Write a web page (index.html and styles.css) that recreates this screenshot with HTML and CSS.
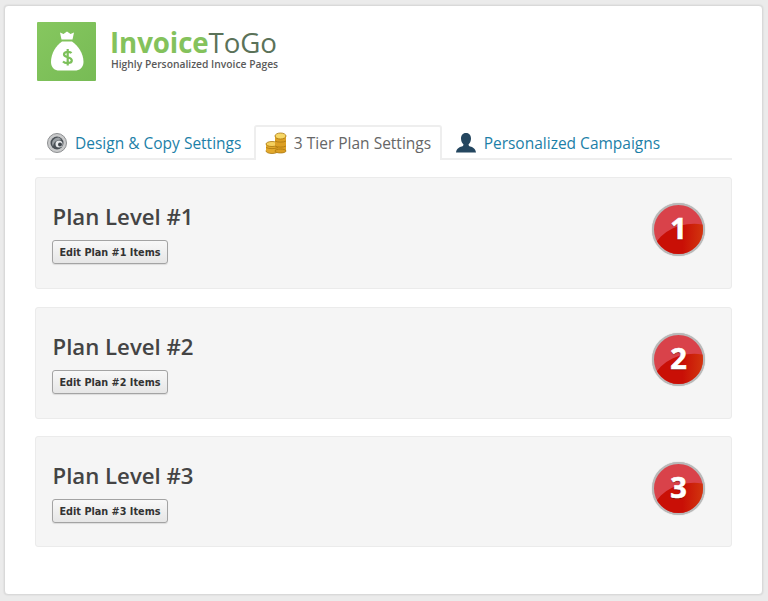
FILE: index.html
```html
<!DOCTYPE html>
<html lang="en">
<head>
<meta charset="utf-8">
<title>InvoiceToGo</title>
<link rel="stylesheet" href="styles.css">
</head>
<body>
<main class="card">
  <header class="brand">
    <svg class="logo" viewBox="0 0 59 59" width="59" height="59">
      <defs><linearGradient id="lg" x1="0" y1="0" x2="1" y2="1"><stop offset="0" stop-color="#86c75f"/><stop offset="1" stop-color="#77bb55"/></linearGradient></defs>
      <rect width="59" height="59" rx="1" fill="url(#lg)"/>
      <path d="M23 10.500 L26.500 12 L30 9.500 L33.500 12 L37 10.500 L35.500 17.500 L24.500 17.500 Z" fill="#fff"/>
      <path d="M25 19.500 L35 19.500 C41 24 46.500 31 46.500 40 C46.500 46 42 48.500 38 48.500 L22 48.500 C18 48.500 14 46 14 40 C14 31 19 24 25 19.500 Z" fill="#fff"/>
      <path d="M34.500 31 C33 29.300 27 29.100 27 32.500 C27 36 34.800 34.500 34.800 38.500 C34.800 41.900 28 41.500 26 39.500 M30.700 27 L30.700 43.500" fill="none" stroke="#7cc05a" stroke-width="2.200"/>
    </svg>
    <div class="brand-text">
      <div class="brand-name"><span class="brand-green">Invoice</span>ToGo</div>
      <div class="brand-tag">Highly Personalized Invoice Pages</div>
    </div>
  </header>

  <nav class="tabs">
    <a class="tab">
      <svg class="tab-icon" viewBox="0 0 22 22" width="22" height="22">
        <circle cx="11" cy="11" r="9.500" fill="#c9cacb" stroke="#8d8f91"/>
        <circle cx="11" cy="11" r="6.500" fill="#4a5056"/>
        <path d="M13 5.500A6 6 0 0 0 7 14.500C8 9 11 8 15.500 7.500Z" fill="#9ba0a4"/>
        <circle cx="13" cy="12" r="3.500" fill="#e6e8ea"/>
        <circle cx="14" cy="12.500" r="2" fill="#3f454b"/>
      </svg>
      <span>Design &amp; Copy Settings</span>
    </a>
    <a class="tab tab-active">
      <svg class="tab-icon" viewBox="0 0 22 22" width="22" height="22">
        <g stroke="#a9770f" stroke-width=".8">
          <ellipse cx="7" cy="19" rx="6" ry="2.500" fill="#e3a92c"/>
          <rect x="1" y="12" width="12" height="7" fill="#e3a92c" stroke="none"/>
          <ellipse cx="7" cy="12" rx="6" ry="2.500" fill="#f5d05e"/>
          <rect x="10" y="4" width="11" height="15" fill="#dc9f24" stroke="none"/>
          <ellipse cx="15.500" cy="19" rx="5.500" ry="2" fill="#dc9f24"/>
          <ellipse cx="15.500" cy="4" rx="5.500" ry="3" fill="#f7d765"/>
          <path d="M10 9c2 1.500 9 1.500 11 0M10 14c2 1.500 9 1.500 11 0M1 15.500c3 1.500 9 1.500 12 0" fill="none"/>
        </g>
      </svg>
      <span>3 Tier Plan Settings</span>
    </a>
    <a class="tab">
      <svg class="tab-icon" viewBox="0 0 22 22" width="22" height="22">
        <path d="M11 1c3.500 0 5 2.500 5 5.500 0 2.500-1 4.500-2.500 6l.5 1.500c3 1 6.500 2 7 6.500H1c.5-4.500 4-5.500 7-6.500l.5-1.500C7 11 6 9 6 6.500 6 3.500 7.500 1 11 1Z" fill="#24465f"/>
      </svg>
      <span>Personalized Campaigns</span>
    </a>
  </nav>

  <section class="panel">
    <div class="panel-body">
      <h2 class="panel-title">Plan Level #1</h2>
      <button class="btn" type="button">Edit Plan #1 Items</button>
    </div>
    <div class="badge"><span class="badge-num">1</span></div>
  </section>
  <section class="panel panel-mid">
    <div class="panel-body">
      <h2 class="panel-title">Plan Level #2</h2>
      <button class="btn" type="button">Edit Plan #2 Items</button>
    </div>
    <div class="badge"><span class="badge-num">2</span></div>
  </section>
  <section class="panel panel-last">
    <div class="panel-body">
      <h2 class="panel-title">Plan Level #3</h2>
      <button class="btn" type="button">Edit Plan #3 Items</button>
    </div>
    <div class="badge"><span class="badge-num">3</span></div>
  </section>
</main>
</body>
</html>
```
FILE: styles.css
```css
* { box-sizing: border-box; }
html, body { margin: 0; padding: 0; }
body {
  width: 768px;
  height: 601px;
  overflow: hidden;
  background: #ebebeb;
  padding: 5px 4px 6px 4px;
  font-family: "Open Sans", sans-serif;
}
.card {
  width: 759px;
  height: 590px;
  background: #fff;
  border: 1px solid #d9d9d9;
  border-radius: 4px;
  box-shadow: 0 0 2px rgba(0,0,0,.12);
  padding: 16px 30px 0 30px;
}
.brand {
  display: flex;
  align-items: flex-start;
  margin-left: 2px;
  height: 59px;
}
.logo { display: block; flex: none; }
.brand-text { margin-left: 14px; padding-top: 5px; }
.brand-name {
  font-family: "Open Sans", sans-serif;
  font-size: 27.700px;
  line-height: 31px;
  color: #5b7259;
  letter-spacing: -.1px;
}
.brand-green { color: #84c25c; font-weight: 700; }
.brand-tag {
  font-size: 10.300px;
  font-weight: 600;
  line-height: 12px;
  color: #5a5a5a;
  margin-left: 1px;
  white-space: nowrap;
}
.tabs {
  display: flex;
  gap: 1.500px;
  height: 35px;
  margin-top: 44px;
  border-bottom: 2px solid #eeeeee;
  padding-left: 0;
  margin-bottom: 17px;
}
.tab {
  display: flex;
  align-items: center;
  height: 35px;
  padding: 0 9px 1px 9px;
  font-size: 15.500px;
  color: #1c7fa8;
  border: 2px solid transparent;
  border-bottom: 0;
  border-radius: 3px 3px 0 0;
  white-space: nowrap;
}
.tab-active {
  color: #666;
  background: #fff;
  border-color: #eeeeee;
}
.tab-icon { flex: none; margin-right: 7px; }
.panel {
  display: flex;
  justify-content: space-between;
  align-items: flex-start;
  height: 112px;
  background: #f5f5f5;
  border: 1px solid #ebebeb;
  border-radius: 3px;
  padding: 25px 26px 0 16px;
  margin-bottom: 18px;
}
.panel-mid { margin-bottom: 17px; }
.panel-last { height: 111px; margin-bottom: 0; }
.panel-title {
  margin: -1px 0 0 .5px;
  font-size: 22.200px;
  line-height: 30px;
  font-weight: 600;
  color: #444;
}
.btn {
  display: block;
  width: 116px;
  height: 24px;
  margin-top: 8px;
  padding: 0;
  font-family: "DejaVu Sans", sans-serif;
  font-size: 9.700px;
  font-weight: 700;
  color: #333;
  background: linear-gradient(#f8f8f8, #e6e6e6);
  border: 1px solid #a3a3a3;
  border-radius: 3px;
  box-shadow: 0 1px 1px rgba(0,0,0,.1);
}
.badge {
  position: relative;
  width: 53px;
  height: 53px;
  border-radius: 50%;
  border: 2px solid #b9b9b9;
  background: #d9424a;
  overflow: hidden;
  box-shadow: 0 0 1px rgba(0,0,0,.3);
  display: flex;
  align-items: center;
  justify-content: center;
}
.badge::before {
  content: "";
  position: absolute;
  left: -2px;
  top: 19px;
  width: 78px;
  height: 58px;
  border-radius: 50%;
  transform: rotate(-8deg);
  background: linear-gradient(100deg, #c90f06 40%, #d64a12 75%);
}
.badge-num {
  position: relative;
  top: -2px;
  font-family: "Open Sans", sans-serif;
  font-size: 29px;
  font-weight: 700;
  line-height: 1;
  color: #fff;
  -webkit-text-stroke: .6px #fff;
  text-shadow: 0 1px 1px rgba(80,0,0,.6);
}
```
